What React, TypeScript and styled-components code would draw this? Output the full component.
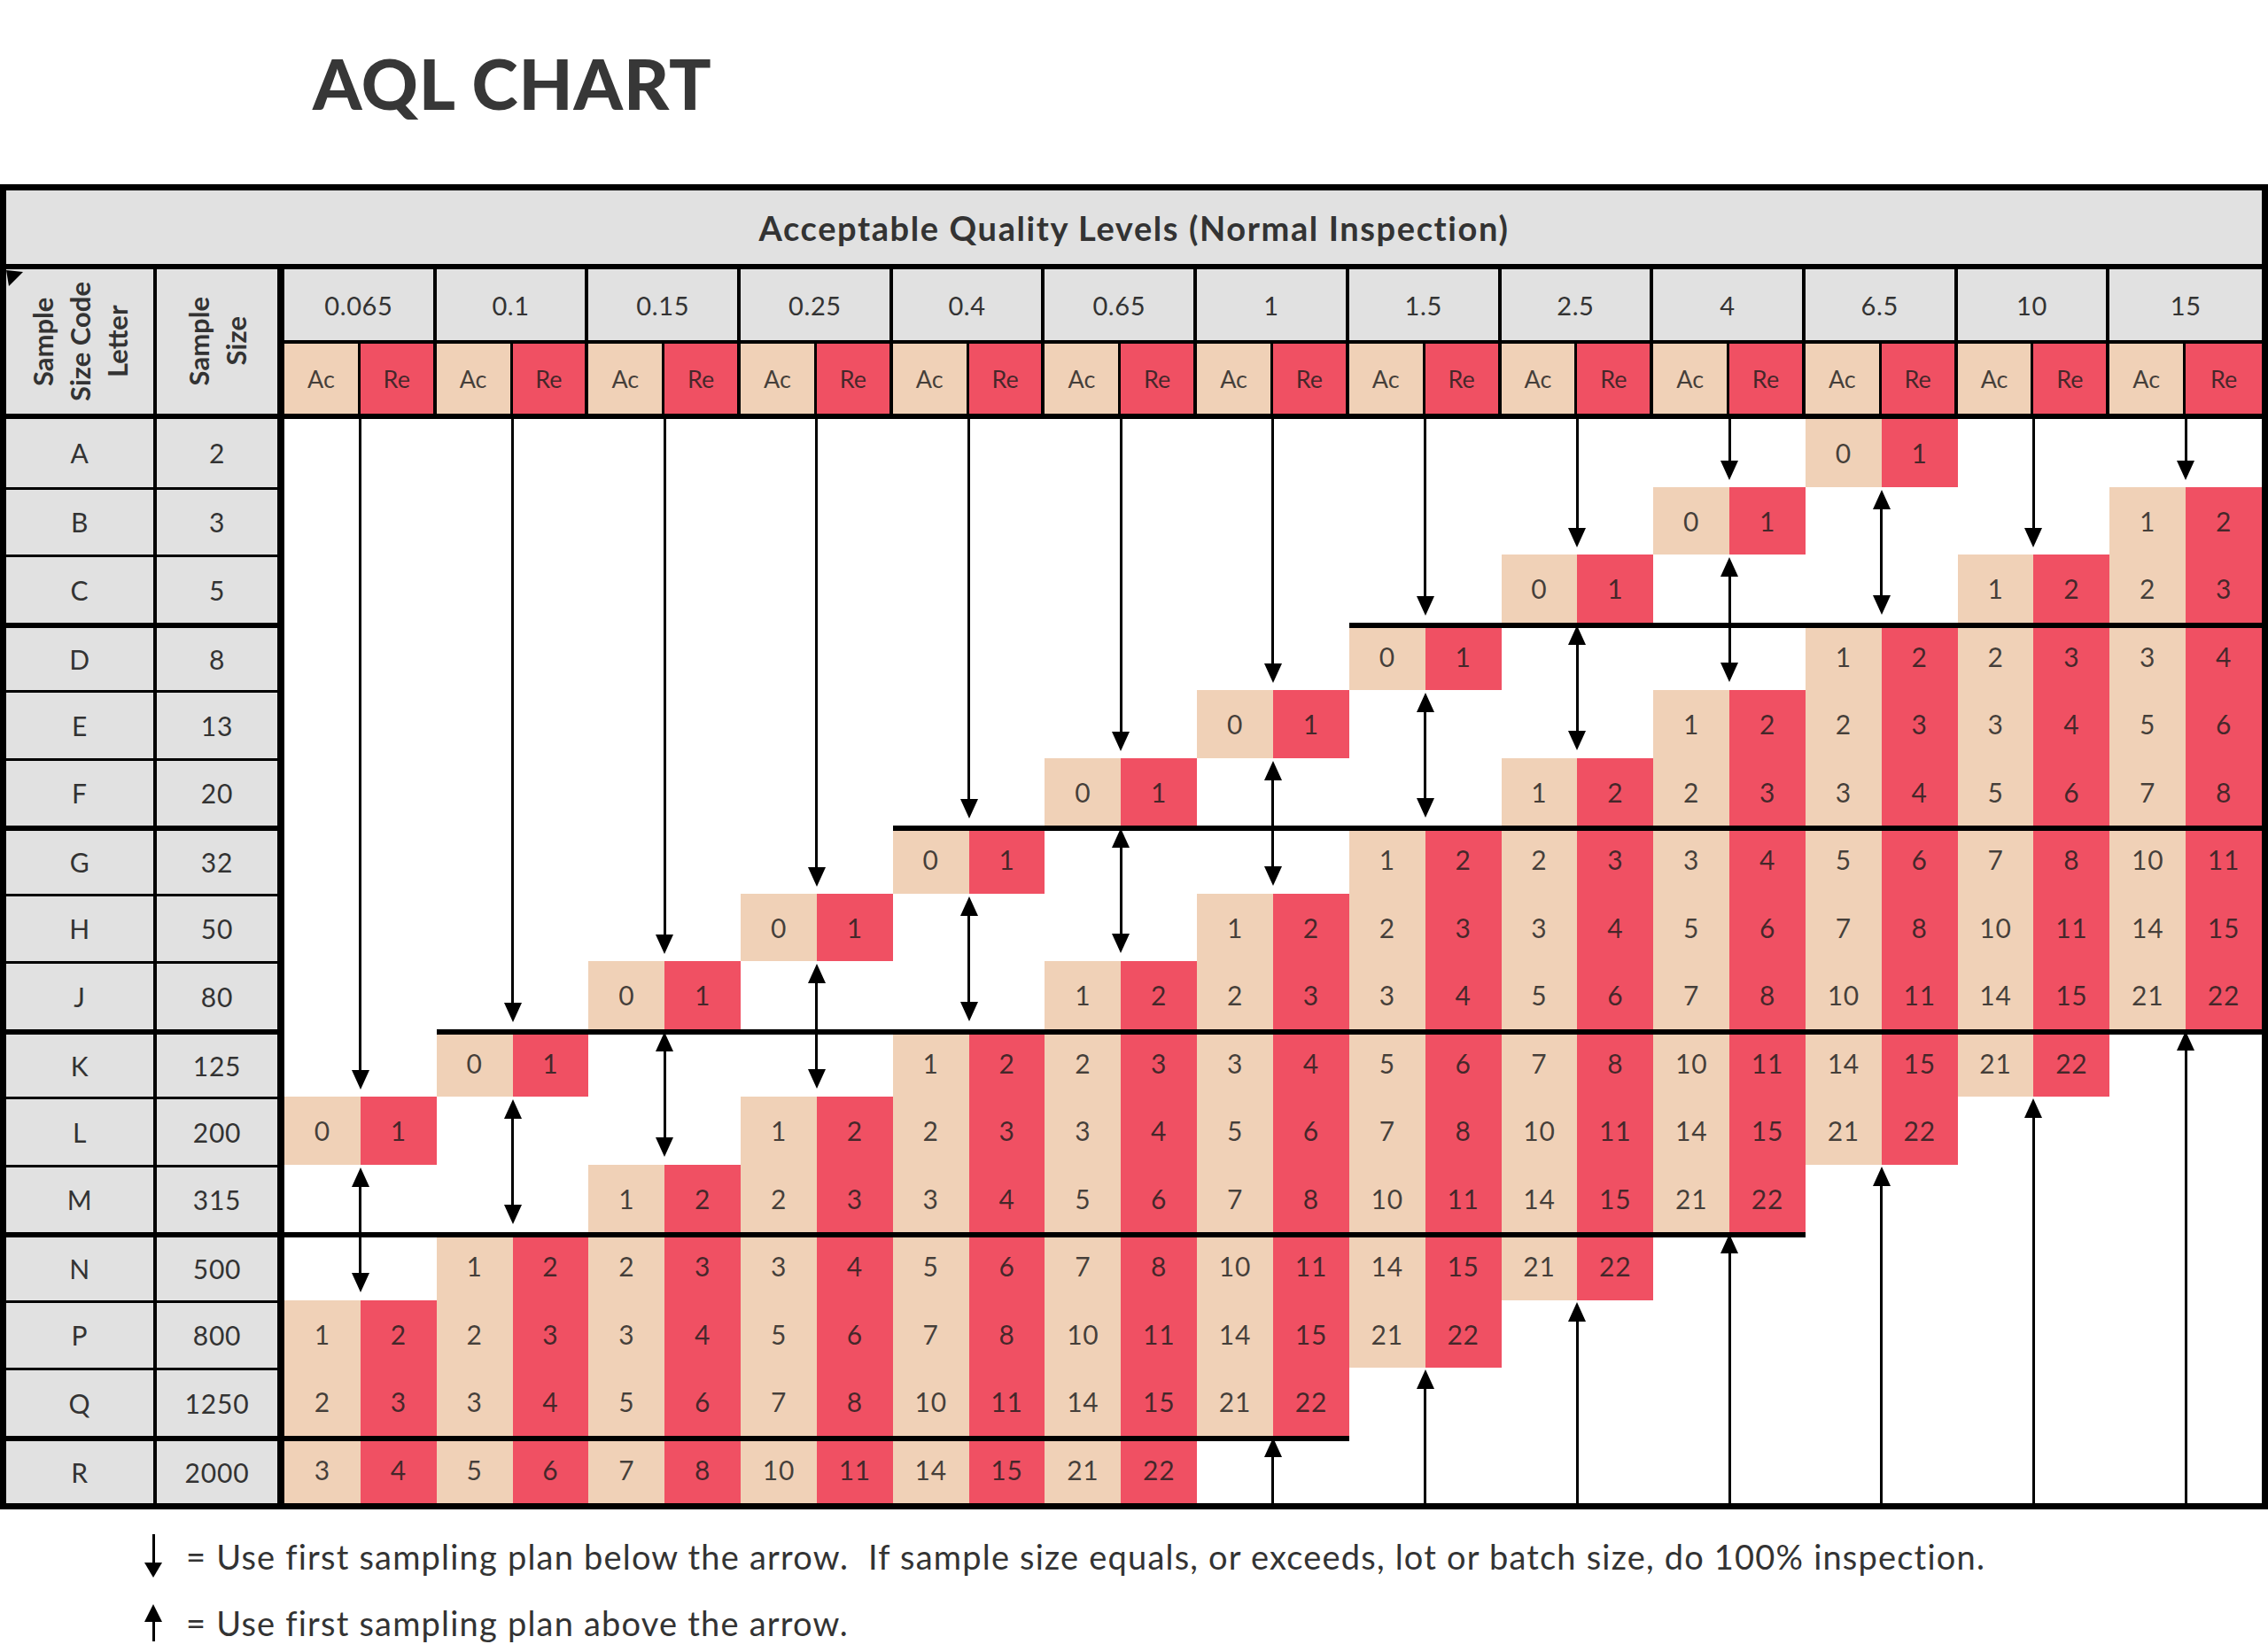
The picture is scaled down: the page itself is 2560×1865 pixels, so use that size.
import React from 'react';
import styled, { createGlobalStyle } from 'styled-components';

const FONT = `Lato, "Noto Sans", "DejaVu Sans", sans-serif`;
const GRAY = '#e1e1e1';
const PEACH = '#f0d1b7';
const RED = '#f05063';
const INK = '#333333';

const GlobalStyle = createGlobalStyle`
  html, body { margin: 0; padding: 0; background: #fff; }
  body { font-family: ${FONT}; color: ${INK}; }
`;

const Page = styled.div`
  width: 2560px;
  height: 1865px;
  display: flex;
  flex-direction: column;
  overflow: hidden;
  background: #fff;
`;

const Title = styled.h1`
  margin: 54px 0 0 353px;
  font: 900 79px/79px ${FONT};
  color: #373737;
  letter-spacing: 1px;
`;

const Table = styled.div`
  margin-top: 75px;
  width: 2560px;
  box-sizing: border-box;
  border: 7px solid #000;
  display: flex;
  flex-direction: column;
`;

const Band = styled.div`
  height: 83px;
  background: ${GRAY};
  border-bottom: 6px solid #000;
  display: flex;
  align-items: center;
  justify-content: center;
  font: 700 38px ${FONT};
  letter-spacing: 1.6px;
  color: ${INK};
`;

const Grid = styled.div`
  display: grid;
  grid-template-columns: 170px 144px repeat(26, 1fr);
  grid-template-rows: 84px 85px repeat(16, 76.5px);
  background: #fff;
`;

const SideHead = styled.div<{ $col: number }>`
  grid-row: 1 / 3;
  grid-column: ${(p) => p.$col};
  position: relative;
  background: ${GRAY};
  border-right: ${(p) => (p.$col === 1 ? 4 : 8)}px solid #000;
  border-bottom: 6px solid #000;
  display: flex;
  align-items: center;
  justify-content: center;
`;

const Vertical = styled.span`
  writing-mode: vertical-rl;
  transform: rotate(180deg);
  text-align: center;
  white-space: pre;
  font: 700 31px/42px ${FONT};
  color: ${INK};
`;

const Corner = styled.svg`
  position: absolute;
  top: 1px;
  left: 0;
`;

const AqlHead = styled.div<{ $g: number }>`
  grid-row: 1;
  grid-column: ${(p) => 3 + p.$g * 2} / span 2;
  background: ${GRAY};
  border-bottom: 4px solid #000;
  border-right: ${(p) => (p.$g === 12 ? 0 : 4)}px solid #000;
  display: flex;
  align-items: center;
  justify-content: center;
  font: 400 29px ${FONT};
  letter-spacing: 0.6px;
  color: ${INK};
`;

const SubHead = styled.div<{ $g: number; $re?: boolean }>`
  grid-row: 2;
  grid-column: ${(p) => 3 + p.$g * 2 + (p.$re ? 1 : 0)};
  background: ${(p) => (p.$re ? RED : PEACH)};
  border-bottom: 6px solid #000;
  border-right: ${(p) => (p.$re ? (p.$g === 12 ? 0 : 4) : 3)}px solid #000;
  display: flex;
  align-items: center;
  justify-content: center;
  font: 400 27px ${FONT};
  color: rgba(30, 30, 30, 0.82);
`;

const RowHead = styled.div<{ $row: number; $col: number; $line: number }>`
  grid-row: ${(p) => p.$row + 3};
  grid-column: ${(p) => p.$col};
  background: ${GRAY};
  border-top: ${(p) => p.$line}px solid #000;
  border-right: ${(p) => (p.$col === 1 ? 4 : 8)}px solid #000;
  display: flex;
  align-items: center;
  justify-content: center;
  font: 400 30px ${FONT};
  letter-spacing: 0.8px;
  color: ${INK};
`;

const Val = styled.div<{ $row: number; $col: number; $re?: boolean }>`
  grid-row: ${(p) => p.$row + 3};
  grid-column: ${(p) => p.$col};
  background: ${(p) => (p.$re ? RED : PEACH)};
  display: flex;
  align-items: center;
  justify-content: center;
  font: 400 30px ${FONT};
  letter-spacing: 0.8px;
  color: rgba(30, 30, 30, 0.82);
`;

const Rule = styled.div<{ $row: number; $from: number; $to: number }>`
  grid-row: ${(p) => p.$row + 3};
  grid-column: ${(p) => 3 + p.$from * 2} / ${(p) => 5 + p.$to * 2};
  align-self: start;
  height: 6px;
  background: #000;
  z-index: 1;
`;

const ArrowCell = styled.div<{ $g: number; $from: number; $to: number; $pt: number; $pb: number }>`
  grid-row: ${(p) => p.$from + 3} / ${(p) => p.$to + 4};
  grid-column: ${(p) => 3 + p.$g * 2} / span 2;
  display: flex;
  flex-direction: column;
  align-items: center;
  padding: ${(p) => p.$pt}px 0 ${(p) => p.$pb}px;
  z-index: 2;
`;

const Shaft = styled.div`
  width: 3px;
  flex: 1;
  background: #000;
`;

const Head = styled.div<{ $up?: boolean; $w?: number; $h?: number }>`
  width: 0;
  height: 0;
  flex: none;
  border-left: ${(p) => (p.$w ?? 20) / 2}px solid transparent;
  border-right: ${(p) => (p.$w ?? 20) / 2}px solid transparent;
  ${(p) =>
    p.$up
      ? `border-bottom: ${p.$h ?? 22}px solid #000;`
      : `border-top: ${p.$h ?? 22}px solid #000;`}
`;

const Legend = styled.div`
  margin-top: 15px;
  display: flex;
  flex-direction: column;
`;

const LegendRow = styled.div`
  height: 75px;
  display: flex;
  align-items: center;
  gap: 26px;
  padding-left: 162px;
  font: 400 38px ${FONT};
  letter-spacing: 1.2px;
  color: ${INK};
  white-space: pre;
`;

const LegendArrow = styled.div<{ $h: number }>`
  width: 22px;
  height: ${(p) => p.$h}px;
  display: flex;
  flex-direction: column;
  align-items: center;
`;

const ROWS = ['A', 'B', 'C', 'D', 'E', 'F', 'G', 'H', 'J', 'K', 'L', 'M', 'N', 'P', 'Q', 'R'];
const SIZES = [2, 3, 5, 8, 13, 20, 32, 50, 80, 125, 200, 315, 500, 800, 1250, 2000];
const AQL = ['0.065', '0.1', '0.15', '0.25', '0.4', '0.65', '1', '1.5', '2.5', '4', '6.5', '10', '15'];
const PAIRS = [[0, 1], [1, 2], [2, 3], [3, 4], [5, 6], [7, 8], [10, 11], [14, 15], [21, 22]];
const THICK = new Set([3, 6, 9, 12, 15]);
const RULES = [
  { row: 3, from: 7, to: 12 },
  { row: 6, from: 4, to: 12 },
  { row: 9, from: 1, to: 12 },
  { row: 12, from: 0, to: 9 },
  { row: 15, from: 0, to: 6 },
];

type Cell = { row: number; g: number; ac: number; re: number };
type Arrow = { g: number; from: number; to: number; kind: 'down' | 'up' | 'both' };

const cells: Cell[] = [];
const arrows: Arrow[] = [];
for (let g = 0; g < 13; g++) {
  if (g <= 10) {
    const zero = 10 - g;
    if (zero > 0) arrows.push({ g, from: 0, to: zero - 1, kind: 'down' });
    cells.push({ row: zero, g, ac: 0, re: 1 });
    arrows.push({ g, from: zero + 1, to: zero + 2, kind: 'both' });
  } else {
    arrows.push({ g, from: 0, to: 12 - g, kind: 'down' });
  }
  const start = 13 - g;
  for (let i = 1; i < PAIRS.length; i++) {
    const r = start + i - 1;
    if (r <= 15) cells.push({ row: r, g, ac: PAIRS[i][0], re: PAIRS[i][1] });
  }
  const upFrom = 21 - g;
  if (upFrom <= 15) arrows.push({ g, from: upFrom, to: 15, kind: 'up' });
}

const INSET = {
  down: [0, 8],
  both: [3, 9],
  up: [2, 0],
} as const;

export default function App() {
  return (
    <Page>
      <GlobalStyle />
      <Title>AQL CHART</Title>
      <Table>
        <Band>Acceptable Quality Levels (Normal Inspection)</Band>
        <Grid>
          <SideHead $col={1}>
            <Corner width="20" height="20" viewBox="0 0 20 20">
              <polygon points="0,0 19,2 3,18" fill="#000" />
            </Corner>
            <Vertical>{'Sample\nSize Code\nLetter'}</Vertical>
          </SideHead>
          <SideHead $col={2}>
            <Vertical>{'Sample\nSize'}</Vertical>
          </SideHead>
          {AQL.map((a, g) => (
            <AqlHead key={a} $g={g}>
              {a}
            </AqlHead>
          ))}
          {AQL.map((a, g) => (
            <React.Fragment key={'s' + a}>
              <SubHead $g={g}>Ac</SubHead>
              <SubHead $g={g} $re>
                Re
              </SubHead>
            </React.Fragment>
          ))}
          {ROWS.map((r, i) => {
            const line = i === 0 ? 0 : THICK.has(i) ? 6 : 3;
            return (
              <React.Fragment key={r}>
                <RowHead $row={i} $col={1} $line={line}>
                  {r}
                </RowHead>
                <RowHead $row={i} $col={2} $line={line}>
                  {SIZES[i]}
                </RowHead>
              </React.Fragment>
            );
          })}
          {cells.map((c) => (
            <React.Fragment key={`${c.g}-${c.row}`}>
              <Val $row={c.row} $col={3 + c.g * 2}>
                {c.ac}
              </Val>
              <Val $row={c.row} $col={4 + c.g * 2} $re>
                {c.re}
              </Val>
            </React.Fragment>
          ))}
          {RULES.map((r) => (
            <Rule key={r.row} $row={r.row} $from={r.from} $to={r.to} />
          ))}
          {arrows.map((a) => (
            <ArrowCell
              key={`${a.g}-${a.kind}`}
              $g={a.g}
              $from={a.from}
              $to={a.to}
              $pt={INSET[a.kind][0]}
              $pb={INSET[a.kind][1]}
            >
              {a.kind !== 'down' && <Head $up />}
              <Shaft />
              {a.kind !== 'up' && <Head />}
            </ArrowCell>
          ))}
        </Grid>
      </Table>
      <Legend>
        <LegendRow>
          <LegendArrow $h={49}>
            <Shaft />
            <Head $w={21} $h={17} />
          </LegendArrow>
          <span>{'= Use first sampling plan below the arrow.  If sample size equals, or exceeds, lot or batch size, do 100% inspection.'}</span>
        </LegendRow>
        <LegendRow>
          <LegendArrow $h={42}>
            <Head $up $w={21} $h={20} />
            <Shaft />
          </LegendArrow>
          <span>{'= Use first sampling plan above the arrow.'}</span>
        </LegendRow>
      </Legend>
    </Page>
  );
}
